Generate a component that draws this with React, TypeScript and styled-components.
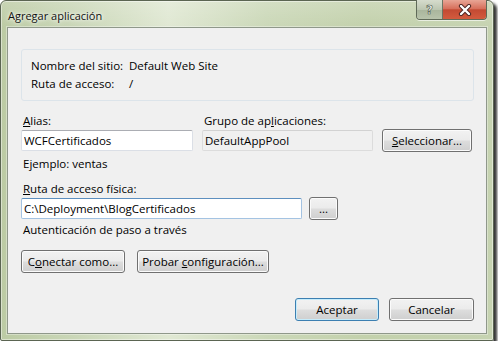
import React from 'react';
import styled, { createGlobalStyle } from 'styled-components';

const GlobalStyle = createGlobalStyle`
	html, body {
		margin: 0;
		padding: 0;
		background: #ffffff;
	}
	body {
		font-family: 'Open Sans', 'Noto Sans', sans-serif;
		font-size: 11.5px;
		color: #000;
	}
`;

const uiFont = `'Open Sans', 'Noto Sans', sans-serif`;

const App = () => {
	return (
		<>
			<GlobalStyle />
			<Window>
				<TitleBar>
					<Title>Agregar aplicación</Title>
					<CaptionGroup>
						<HelpButton>?</HelpButton>
						<CloseButton>
							<svg width="16" height="12" viewBox="0 0 16 12">
								<path d="M4 2 L12 10 M12 2 L4 10" stroke="#4a2320" strokeWidth="4.2" strokeLinecap="round" />
								<path d="M4 2 L12 10 M12 2 L4 10" stroke="#ffffff" strokeWidth="2.4" strokeLinecap="round" />
							</svg>
						</CloseButton>
					</CaptionGroup>
				</TitleBar>
				<Client>
					<InfoBox>
						<InfoLabel>Nombre del sitio:</InfoLabel>
						<span>Default Web Site</span>
						<InfoLabel>Ruta de acceso:</InfoLabel>
						<span>/</span>
					</InfoBox>

					<AliasGrid>
						<Label>
							<u>A</u>lias:
						</Label>
						<Label>
							Grupo de ap<u>l</u>icaciones:
						</Label>
						<span />
						<TextBox defaultValue="WCFCertificados" readOnly />
						<TextBox $readonly defaultValue="DefaultAppPool" readOnly />
						<Button $w={90}>
							<u>S</u>eleccionar...
						</Button>
					</AliasGrid>

					<Hint>Ejemplo: ventas</Hint>

					<PathLabel>
						<u>R</u>uta de acceso física:
					</PathLabel>
					<PathRow>
						<TextBox $focused $w={281} defaultValue="C:\Deployment\BlogCertificados" readOnly />
						<Button $w={29}>...</Button>
					</PathRow>

					<AuthHint>Autenticación de paso a través</AuthHint>

					<ButtonRow>
						<Button $w={104}>
							C<u>o</u>nectar como...
						</Button>
						<Button $w={132}>
							Probar <u>c</u>onfiguración...
						</Button>
					</ButtonRow>

					<Footer>
						<Button $w={84} $default>
							Aceptar
						</Button>
						<Button $w={85}>Cancelar</Button>
					</Footer>
				</Client>
			</Window>
		</>
	);
};

const Window = styled.div`
	box-sizing: border-box;
	width: 494px;
	height: 341px;
	display: flex;
	flex-direction: column;
	padding: 0 6px 6px 6px;
	border: 1px solid #5b6552;
	border-radius: 6px 6px 2px 2px;
	background:
		linear-gradient(180deg, rgba(255, 255, 255, 0.18) 0px, rgba(255, 255, 255, 0) 26px),
		linear-gradient(90deg, #bccba4 0%, #c9d6b6 14%, #e0e8d3 34%, #cbd8b8 54%, #c3d1ac 74%, #c6d3b1 100%);
	box-shadow:
		inset 0 0 0 1px rgba(255, 255, 255, 0.45),
		3px 3px 3px rgba(0, 0, 0, 0.8);
`;

const TitleBar = styled.div`
	height: 26px;
	display: flex;
	align-items: flex-start;
	justify-content: space-between;
`;

const Title = styled.div`
	font-family: ${uiFont};
	font-size: 11px;
	line-height: 16px;
	margin: 7px 0 0 1px;
	color: #111;
	text-shadow: 0 0 6px rgba(255, 255, 255, 0.9), 0 0 3px rgba(255, 255, 255, 0.9);
`;

const CaptionGroup = styled.div`
	display: flex;
	margin-top: -1px;
	border: 1px solid #5f6a58;
	border-top: none;
	border-radius: 0 0 4px 4px;
	overflow: hidden;
	box-shadow: 0 1px 0 rgba(255, 255, 255, 0.6);
`;

const HelpButton = styled.div`
	width: 25px;
	height: 19px;
	display: flex;
	align-items: center;
	justify-content: center;
	font-family: 'DejaVu Sans', sans-serif;
	font-weight: bold;
	font-size: 12px;
	color: #f4f4f4;
	-webkit-text-stroke: 0.6px #4b5646;
	background: linear-gradient(180deg, #d6dccd 0%, #bcc6b1 50%, #a9b59c 51%, #b8c3ab 100%);
	border-right: 1px solid #6c7664;
`;

const CloseButton = styled.div`
	width: 43px;
	height: 19px;
	display: flex;
	align-items: center;
	justify-content: center;
	background: linear-gradient(180deg, #e8a595 0%, #d7705c 45%, #c34a33 52%, #d35b3e 100%);
`;

const Client = styled.div`
	flex: 1;
	display: flex;
	flex-direction: column;
	padding: 21px 12px 12px 13px;
	background: #f0f0f0;
	border: 1px solid #8f988a;
	font-family: ${uiFont};
	font-size: 11.5px;
	box-shadow: 0 0 0 1px rgba(255, 255, 255, 0.35);
`;

const InfoBox = styled.div`
	display: grid;
	grid-template-columns: 98px auto;
	grid-auto-rows: 18px;
	align-items: center;
	height: 52px;
	box-sizing: border-box;
	padding: 6px 8px 8px 9px;
	border: 1px solid #dce4ea;
	border-radius: 3px;
`;

const InfoLabel = styled.span`
	color: #000;
`;

const AliasGrid = styled.div`
	display: grid;
	grid-template-columns: 172px 171px 90px;
	grid-template-rows: 16px 23px;
	column-gap: 9px;
	align-items: center;
	margin-top: 12px;
`;

const Label = styled.span`
	padding-left: 2px;
	line-height: 16px;
`;

const TextBox = styled.input<{ $readonly?: boolean; $focused?: boolean; $w?: number }>`
	box-sizing: border-box;
	width: ${(p) => (p.$w ? `${p.$w}px` : '100%')};
	height: 21px;
	padding: 0 2px;
	margin: 0;
	font-family: ${uiFont};
	font-size: 11.5px;
	color: #000;
	outline: none;
	background: ${(p) => (p.$readonly ? '#f0f0f0' : '#ffffff')};
	border: 1px solid ${(p) => (p.$readonly ? '#dcdcdc' : p.$focused ? '#a4c3e2' : '#dbdfe6')};
	border-top-color: ${(p) => (p.$readonly ? '#d2d2d2' : p.$focused ? '#5d8fbf' : '#abadb3')};
	border-radius: 2px;
`;

const Hint = styled.div`
	line-height: 16px;
	padding-left: 2px;
	margin-top: 4px;
`;

const PathLabel = styled(Hint)`
	margin-top: 9px;
`;

const AuthHint = styled(Hint)`
	margin-top: 2px;
`;

const PathRow = styled.div`
	display: flex;
	align-items: center;
	gap: 7px;
	height: 23px;
`;

const ButtonRow = styled.div`
	display: flex;
	gap: 12px;
	margin-top: 12px;
`;

const Footer = styled.div`
	display: flex;
	justify-content: flex-end;
	gap: 10px;
	margin-top: auto;
`;

const Button = styled.button<{ $w: number; $default?: boolean }>`
	box-sizing: border-box;
	width: ${(p) => p.$w}px;
	height: 23px;
	padding: 0;
	font-family: ${uiFont};
	font-size: 11.5px;
	color: #000;
	border: 1px solid ${(p) => (p.$default ? '#3c7fb1' : '#707070')};
	border-radius: 3px;
	background: linear-gradient(180deg, #f2f2f2 0%, #ebebeb 48%, #dddddd 52%, #cfcfcf 100%);
	box-shadow: inset 0 0 0 1px ${(p) => (p.$default ? '#c6ecfb' : '#fbfbfb')};
`;

export default App;
